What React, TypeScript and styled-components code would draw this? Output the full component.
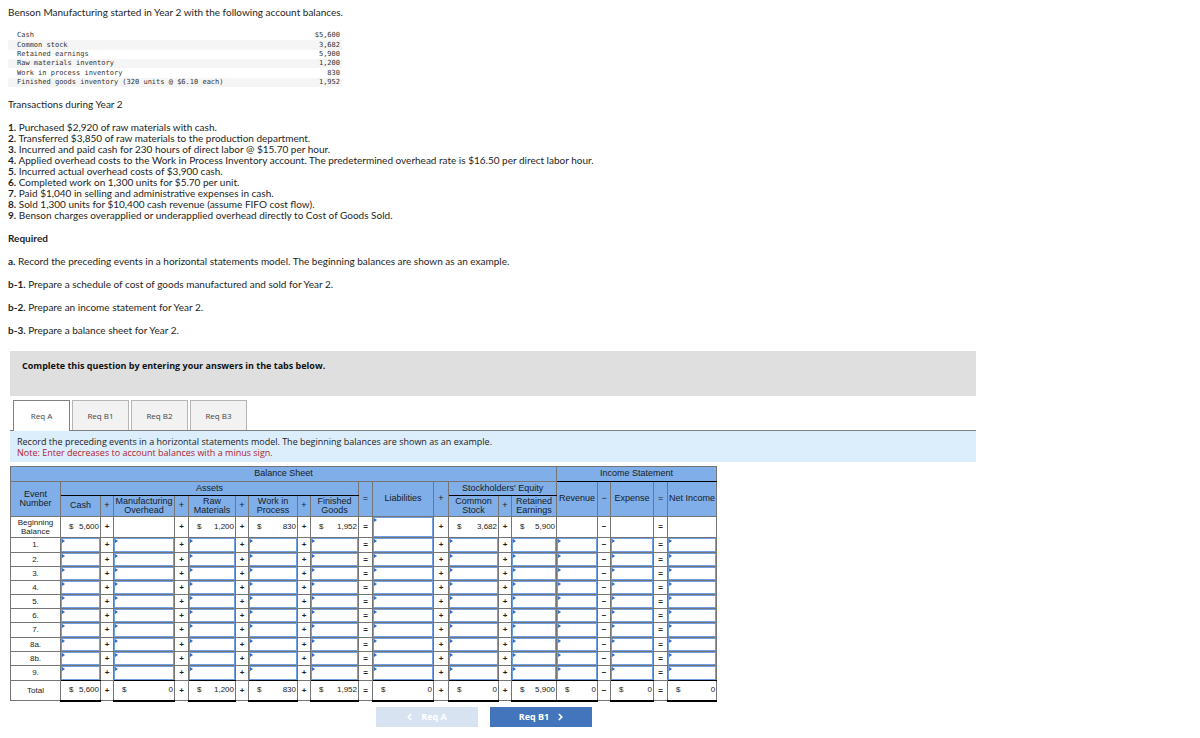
import React from 'react';
import styled, { createGlobalStyle, css } from 'styled-components';

const GlobalStyle = createGlobalStyle`
  * { box-sizing: border-box; }
  body {
    margin: 0;
    background: #fff;
    color: #1e1e1e;
    font: 10px/11px Lato, 'Open Sans', sans-serif;
  }
`;

const Page = styled.main`
  max-width: 976px;
  padding: 7px 0 11px 8px;
`;

const Paragraph = styled.p`
  margin: 12px 0 0;
  &:first-child { margin-top: 0; }
`;

const Heading = styled.h2`
  margin: 12px 0 0;
  font-size: 10px;
  line-height: 11px;
`;

const BalanceTable = styled.table`
  width: 334px;
  margin-top: 13px;
  border-collapse: collapse;
  font: 7px/9px 'DejaVu Sans Mono', monospace;
  color: #333;
  tr { height: 9px; }
  tr:nth-child(3n + 2) { height: 10px; }
  tr:nth-child(even) { background: #f5f5f5; }
`;

const BalanceName = styled.th`
  padding: 0 0 0 9px;
  font-weight: 400;
  text-align: left;
`;

const BalanceAmount = styled.td`
  padding: 0 2px 0 0;
  text-align: right;
`;

const TransactionList = styled.ol`
  margin: 12px 0 0;
  padding: 0;
  list-style: none;
`;

const Workspace = styled.section`
  margin: 15px 0 0 2px;
`;

const Banner = styled.div`
  height: 45px;
  padding: 9px 12px;
  background: #dfdfdf;
  color: #111;
  font: 700 9px/12px 'Open Sans', sans-serif;
`;

const TabStrip = styled.div`
  display: flex;
  gap: 2px;
  margin-top: 4px;
  padding-left: 3px;
  border-bottom: 1px solid #808080;
`;

const Tab = styled.button<{ $active?: boolean }>`
  width: 57px;
  height: ${(p) => (p.$active ? '31px' : '30px')};
  margin-bottom: ${(p) => (p.$active ? '-1px' : '0')};
  padding: 0;
  border: 1px solid ${(p) => (p.$active ? '#808080' : '#b5b5b5')};
  border-bottom: 0;
  background: ${(p) => (p.$active ? '#fff' : '#f2f2f2')};
  color: #444;
  font: 8px/10px 'Open Sans', sans-serif;
`;

const Instructions = styled.div`
  padding: 5px 7px 4px;
  background: #dcedfc;
  color: #222;
  font: 9px/11px 'Open Sans', sans-serif;
  p { margin: 0; }
`;

const Note = styled.p`
  color: #b3202c;
`;

const Scroller = styled.div`
  margin-top: 4px;
  overflow-x: auto;
`;

const Ledger = styled.table`
  width: 706px;
  table-layout: fixed;
  border-collapse: collapse;
  font: 8px/9px 'Liberation Sans', sans-serif;
  color: #222;
`;

const LedgerRow = styled.tr<{ $height: number }>`
  height: ${(p) => p.$height}px;
`;

const HeadCell = styled.th<{ $underlined?: boolean }>`
  padding: 0 0 1px;
  border: 1px solid #757575;
  background: #80aee8;
  color: #141c28;
  font-weight: 400;
  font-size: 9px;
  ${(p) => p.$underlined && css`border-bottom-color: #000;`}
`;

const RowLabel = styled.th`
  padding: 0 0 1px;
  border: 1px solid #757575;
  font-weight: 400;
`;

const OperatorCell = styled.td`
  padding: 0 0 1px;
  border: 1px solid #757575;
  font-weight: 700;
  text-align: center;
`;

const ValueCell = styled.td<{ $kind?: 'last' | 'total' }>`
  position: relative;
  padding: 0;
  border: 1px solid #757575;
  ${(p) => p.$kind === 'last' && css`border-bottom-color: #000;`}
  ${(p) => p.$kind === 'total' && css`border-bottom: 2px solid #000;`}
`;

const EntryCell = styled(ValueCell)`
  &::before {
    content: '';
    position: absolute;
    top: 1px;
    left: 1px;
    width: 3px;
    height: 4px;
    background: #2f6bc4;
    clip-path: polygon(0 0, 100% 50%, 0 100%);
  }
`;

const Entry = styled.input<{ $height: number }>`
  display: block;
  width: 100%;
  height: ${(p) => p.$height}px;
  padding: 0 2px;
  border: 1px solid #6f9fe0;
  border-radius: 0;
  background: #fff;
  font: inherit;
  text-align: right;
`;

const Money = styled.span`
  display: flex;
  justify-content: space-between;
  padding: 0 1px 1px 8px;
`;

const StepNav = styled.nav`
  display: flex;
  justify-content: center;
  gap: 12px;
  margin-top: 5px;
  padding-right: 18px;
`;

const StepButton = styled.button`
  display: flex;
  align-items: center;
  justify-content: center;
  gap: 9px;
  width: 102px;
  height: 20px;
  padding: 0;
  border: 0;
  background: #4275bb;
  color: #fff;
  font: 700 9px/11px 'Open Sans', sans-serif;
  &:disabled { background: #d8e3f2; }
`;

const Chevron = ({ back }: { back?: boolean }) => (
  <svg width="5" height="8" viewBox="0 0 5 8" fill="none" stroke="currentColor" strokeWidth="1.6" aria-hidden="true">
    <path d={back ? 'M4.2 1 1.2 4l3 3' : 'M.8 1l3 3-3 3'} />
  </svg>
);

const balances = [
  ['Cash', '$5,600'],
  ['Common stock', '3,682'],
  ['Retained earnings', '5,900'],
  ['Raw materials inventory', '1,200'],
  ['Work in process inventory', '830'],
  ['Finished goods inventory (320 units @ $6.10 each)', '1,952'],
];

const transactions = [
  'Purchased $2,920 of raw materials with cash.',
  'Transferred $3,850 of raw materials to the production department.',
  'Incurred and paid cash for 230 hours of direct labor @ $15.70 per hour.',
  'Applied overhead costs to the Work in Process Inventory account. The predetermined overhead rate is $16.50 per direct labor hour.',
  'Incurred actual overhead costs of $3,900 cash.',
  'Completed work on 1,300 units for $5.70 per unit.',
  'Paid $1,040 in selling and administrative expenses in cash.',
  'Sold 1,300 units for $10,400 cash revenue (assume FIFO cost flow).',
  'Benson charges overapplied or underapplied overhead directly to Cost of Goods Sold.',
];

const requirements = [
  ['a.', 'Record the preceding events in a horizontal statements model. The beginning balances are shown as an example.'],
  ['b-1.', 'Prepare a schedule of cost of goods manufactured and sold for Year 2.'],
  ['b-2.', 'Prepare an income statement for Year 2.'],
  ['b-3.', 'Prepare a balance sheet for Year 2.'],
];

const columnWidths = [50, 40, 13, 61, 14, 47, 13, 49, 13, 48, 14, 61, 15, 50, 13, 45, 41, 13, 43, 14, 49];

/* Each account is followed by the operator that joins it to the next one. */
const accounts = [
  { name: 'Cash', op: '+', begin: '5,600', total: '5,600' },
  { name: 'Manufacturing Overhead', op: '+', begin: '', total: '0' },
  { name: 'Raw Materials', op: '+', begin: '1,200', total: '1,200' },
  { name: 'Work in Process', op: '+', begin: '830', total: '830' },
  { name: 'Finished Goods', op: '=', begin: '1,952', total: '1,952' },
  { name: 'Liabilities', op: '+', begin: null, total: '0' },
  { name: 'Common Stock', op: '+', begin: '3,682', total: '0' },
  { name: 'Retained Earnings', op: '', begin: '5,900', total: '5,900' },
  { name: 'Revenue', op: '−', begin: '', total: '0' },
  { name: 'Expense', op: '=', begin: '', total: '0' },
  { name: 'Net Income', op: '', begin: '', total: '0' },
];

const events = [
  { label: '1.', height: 15 },
  { label: '2.', height: 14 },
  { label: '3.', height: 14 },
  { label: '4.', height: 14 },
  { label: '5.', height: 14 },
  { label: '6.', height: 14 },
  { label: '7.', height: 15 },
  { label: '8a.', height: 14 },
  { label: '8b.', height: 14 },
  { label: '9.', height: 15 },
];

const Amount = ({ value }: { value: string }) =>
  value ? (
    <Money>
      <span>$</span>
      <span>{value}</span>
    </Money>
  ) : null;

const LedgerHead = () => (
  <thead>
    <LedgerRow $height={15}>
      <HeadCell colSpan={16}>Balance Sheet</HeadCell>
      <HeadCell colSpan={5} $underlined>Income Statement</HeadCell>
    </LedgerRow>
    <LedgerRow $height={14}>
      <HeadCell rowSpan={2}>Event Number</HeadCell>
      <HeadCell colSpan={9} $underlined>Assets</HeadCell>
      <HeadCell rowSpan={2}>=</HeadCell>
      <HeadCell rowSpan={2}>Liabilities</HeadCell>
      <HeadCell rowSpan={2}>+</HeadCell>
      <HeadCell colSpan={3} $underlined>Stockholders' Equity</HeadCell>
      <HeadCell rowSpan={2}>Revenue</HeadCell>
      <HeadCell rowSpan={2}>−</HeadCell>
      <HeadCell rowSpan={2}>Expense</HeadCell>
      <HeadCell rowSpan={2}>=</HeadCell>
      <HeadCell rowSpan={2}>Net Income</HeadCell>
    </LedgerRow>
    <LedgerRow $height={21}>
      {['Cash', '+', 'Manufacturing Overhead', '+', 'Raw Materials', '+', 'Work in Process', '+', 'Finished Goods', 'Common Stock', '+', 'Retained Earnings'].map(
        (text, i) => (
          <HeadCell key={i}>{text}</HeadCell>
        ),
      )}
    </LedgerRow>
  </thead>
);

const App = () => (
  <>
    <GlobalStyle />
    <Page>
      <Paragraph>Benson Manufacturing started in Year 2 with the following account balances.</Paragraph>
      <BalanceTable>
        <tbody>
          {balances.map(([name, amount]) => (
            <tr key={name}>
              <BalanceName scope="row">{name}</BalanceName>
              <BalanceAmount>{amount}</BalanceAmount>
            </tr>
          ))}
        </tbody>
      </BalanceTable>
      <Paragraph>Transactions during Year 2</Paragraph>
      <TransactionList>
        {transactions.map((text, i) => (
          <li key={text}>
            <b>{i + 1}.</b> {text}
          </li>
        ))}
      </TransactionList>
      <Heading>Required</Heading>
      {requirements.map(([mark, text]) => (
        <Paragraph key={mark}>
          <b>{mark}</b> {text}
        </Paragraph>
      ))}

      <Workspace>
        <Banner>Complete this question by entering your answers in the tabs below.</Banner>
        <TabStrip role="tablist">
          {['Req A', 'Req B1', 'Req B2', 'Req B3'].map((name, i) => (
            <Tab key={name} type="button" role="tab" aria-selected={i === 0} $active={i === 0}>
              {name}
            </Tab>
          ))}
        </TabStrip>
        <Instructions>
          <p>Record the preceding events in a horizontal statements model. The beginning balances are shown as an example.</p>
          <Note>Note: Enter decreases to account balances with a minus sign.</Note>
        </Instructions>

        <Scroller>
          <Ledger>
            <colgroup>
              {columnWidths.map((width, i) => (
                <col key={i} width={width} />
              ))}
            </colgroup>
            <LedgerHead />
            <tbody>
              <LedgerRow $height={21}>
                <RowLabel scope="row">Beginning Balance</RowLabel>
                {accounts.map((a) => (
                  <React.Fragment key={a.name}>
                    {a.begin === null ? (
                      <EntryCell>
                        <Entry $height={20} aria-label={`Beginning Balance ${a.name}`} />
                      </EntryCell>
                    ) : (
                      <ValueCell>
                        <Amount value={a.begin} />
                      </ValueCell>
                    )}
                    {a.op && <OperatorCell>{a.op}</OperatorCell>}
                  </React.Fragment>
                ))}
              </LedgerRow>
              {events.map((e, i) => (
                <LedgerRow key={e.label} $height={e.height}>
                  <RowLabel scope="row">{e.label}</RowLabel>
                  {accounts.map((a) => (
                    <React.Fragment key={a.name}>
                      <EntryCell $kind={i === events.length - 1 ? 'last' : undefined}>
                        <Entry $height={e.height - 1} aria-label={`${e.label} ${a.name}`} />
                      </EntryCell>
                      {a.op && <OperatorCell>{a.op}</OperatorCell>}
                    </React.Fragment>
                  ))}
                </LedgerRow>
              ))}
              <LedgerRow $height={20}>
                <RowLabel scope="row">Total</RowLabel>
                {accounts.map((a) => (
                  <React.Fragment key={a.name}>
                    <ValueCell $kind="total">
                      <Amount value={a.total} />
                    </ValueCell>
                    {a.op && <OperatorCell>{a.op}</OperatorCell>}
                  </React.Fragment>
                ))}
              </LedgerRow>
            </tbody>
          </Ledger>
        </Scroller>

        <StepNav aria-label="Requirement steps">
          <StepButton type="button" disabled>
            <Chevron back />
            Req A
          </StepButton>
          <StepButton type="button">
            Req B1
            <Chevron />
          </StepButton>
        </StepNav>
      </Workspace>
    </Page>
  </>
);

export default App;
